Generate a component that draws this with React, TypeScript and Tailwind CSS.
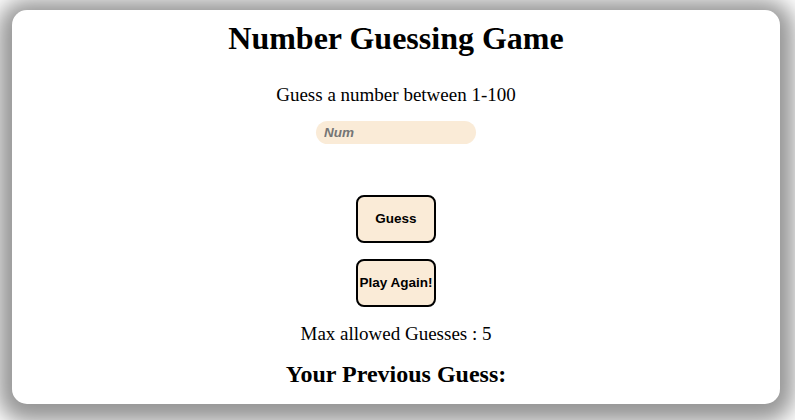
export default function App() {
  return (
    <div className="w-[795px] h-[420px] bg-white overflow-hidden pt-[10px] pl-[12px]">
      <div className="w-[768px] h-[394px] bg-white rounded-[15px] shadow-[0_4px_22px_14px_rgba(0,0,0,0.42)] flex flex-col items-center font-['Liberation_Serif',serif] text-black">
        <h1 className="mt-[10px] text-[32px] leading-[37px] font-bold">Number Guessing Game</h1>
        <p className="mt-[27px] text-[19px] leading-[22px]">Guess a number between 1-100</p>
        <input
          type="text"
          placeholder="Num"
          className="mt-[15px] w-[160px] h-[23px] rounded-full bg-[#faebd7] px-[8px] text-[13.5px] font-bold italic font-['Liberation_Sans',sans-serif] outline-none placeholder:text-[#757575]"
        />
        <button className="mt-[51px] w-[80px] h-[48px] border-2 border-black rounded-[8px] bg-[#faebd7] text-[13.5px] font-bold font-['Liberation_Sans',sans-serif]">
          Guess
        </button>
        <button className="mt-[16px] w-[80px] h-[48px] border-2 border-black rounded-[8px] bg-[#faebd7] text-[13.5px] font-bold font-['Liberation_Sans',sans-serif] whitespace-nowrap px-0">
          Play Again!
        </button>
        <p className="mt-[16px] text-[19px] leading-[22px]">Max allowed Guesses : 5</p>
        <h2 className="mt-[15px] text-[24px] leading-[28px] font-bold">Your Previous Guess:</h2>
      </div>
    </div>
  );
}
